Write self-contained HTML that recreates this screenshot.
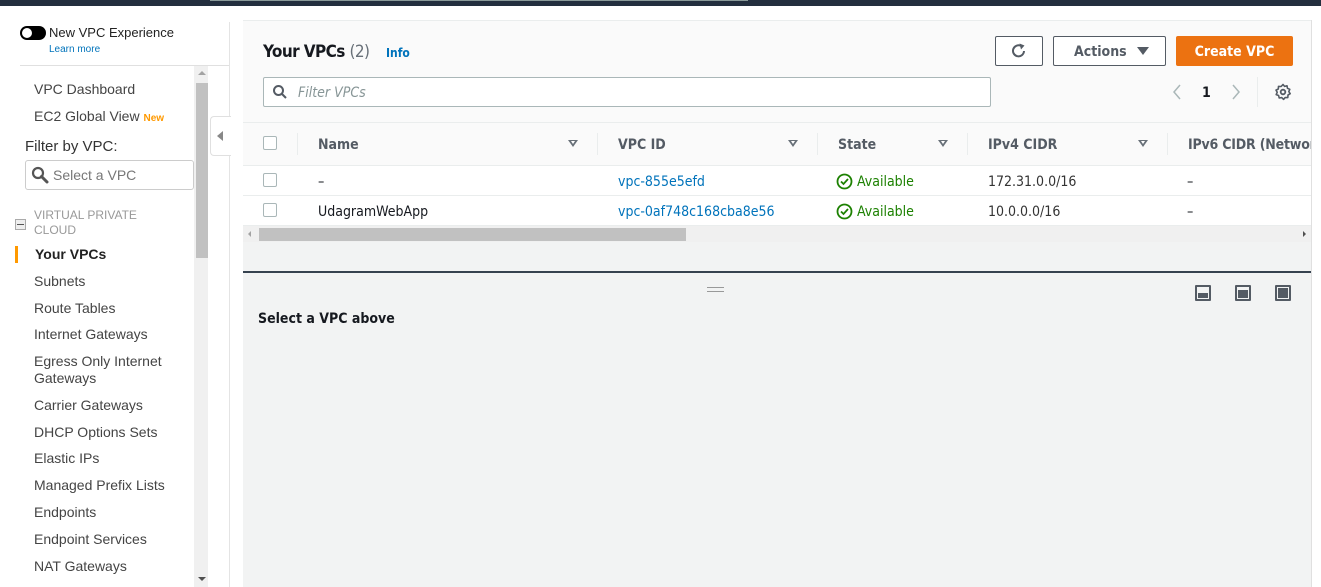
<!DOCTYPE html>
<html><head><meta charset="utf-8"><style>
*{margin:0;padding:0;box-sizing:border-box}
body{width:1321px;height:587px;overflow:hidden;background:#fff;font-family:"Liberation Sans",Arial,sans-serif;position:relative;color:#16191f}
.a{position:absolute}
.nav{font-size:14px;color:#444;position:absolute;left:34px;white-space:nowrap}
.m{font-family:"DejaVu Sans Condensed","Liberation Sans",sans-serif}
.th{position:absolute;top:137px;font-size:14px;font-weight:bold;color:#545b64}
.td{position:absolute;font-size:14px;color:#16191f}
.cb{position:absolute;left:263px;width:14px;height:14px;border:1px solid #aab7b8;border-radius:2px;background:#fff}
.sep{position:absolute;top:133px;width:1px;height:22px;background:#eaeded}
.tri{position:absolute;top:140px;width:0;height:0;border-left:5px solid transparent;border-right:5px solid transparent;border-top:7px solid #687078}
.tri::after{content:"";position:absolute;left:-2px;top:-6px;border-left:2px solid transparent;border-right:2px solid transparent;border-top:3px solid #fff}
.lnk{color:#0073bb}
.ok{color:#1d8102}
</style></head><body>
<div class="a" style="left:0;top:0;width:1321px;height:6px;background:#232f3e"></div>
<div class="a" style="left:210px;top:0;width:538px;height:1px;background:#8a9a99"></div>

<div class="a" style="left:20px;top:26px;width:26px;height:14px;border-radius:7px;background:#000"></div>
<div class="a" style="left:22px;top:28px;width:10px;height:10px;border-radius:5px;background:#fff"></div>
<div class="a" style="left:49px;top:25px;font-size:13px;color:#222">New VPC Experience</div>
<div class="a" style="left:49px;top:44px;font-size:10px;color:#0073bb">Learn more</div>
<div class="a" style="left:20px;top:65px;width:210px;height:1px;background:#e0e0e0"></div>
<div class="a" style="left:229px;top:22px;width:1px;height:565px;background:#e4e4e4"></div>
<div class="a" style="left:194px;top:66px;width:14px;height:521px;background:#f0f0f0"></div>
<div class="a" style="left:196px;top:83px;width:12px;height:175px;background:#c1c1c1"></div>
<div class="a" style="left:198px;top:71px;border-left:4px solid transparent;border-right:4px solid transparent;border-bottom:4px solid #a3a3a3"></div>
<div class="a" style="left:198px;top:577px;border-left:4px solid transparent;border-right:4px solid transparent;border-top:4px solid #505050"></div>
<div class="a" style="left:210px;top:116px;width:21px;height:40px;border:1px solid #e0e0e0;border-right:none;border-radius:4px 0 0 4px;background:#fff"></div>
<div class="a" style="left:217px;top:131px;border-top:5px solid transparent;border-bottom:5px solid transparent;border-right:6px solid #888"></div>

<div class="nav" style="top:81px">VPC Dashboard</div>
<div class="nav" style="top:108px">EC2 Global View <span style="font-size:10px;color:#ff9900;font-weight:bold">New</span></div>
<div class="nav" style="left:25px;top:138px;font-size:15px;color:#333">Filter by VPC:</div>
<div class="a" style="left:25px;top:160px;width:169px;height:30px;border:1px solid #ccc;border-radius:3px;background:#fff"></div>
<svg class="a" style="left:31px;top:166px" width="18" height="18" viewBox="0 0 18 18"><circle cx="7" cy="7" r="5" fill="none" stroke="#555" stroke-width="2.2"/><path d="M10.5 10.5L16 16" stroke="#555" stroke-width="3" stroke-linecap="round"/></svg>
<div class="nav" style="left:53px;top:167px;color:#777">Select a VPC</div>
<div class="a" style="left:15px;top:219px;width:11px;height:11px;border:1px solid #aaa;background:#eee"></div>
<div class="a" style="left:17px;top:224px;width:7px;height:1px;background:#555"></div>
<div class="nav" style="top:208px;font-size:12px;color:#999;line-height:15px">VIRTUAL PRIVATE<br>CLOUD</div>
<div class="a" style="left:15px;top:246px;width:3px;height:17px;background:#ff9900"></div>
<div class="nav" style="left:35px;top:246px;font-weight:bold;color:#222">Your VPCs</div>
<div class="nav" style="top:273px">Subnets</div>
<div class="nav" style="top:300px">Route Tables</div>
<div class="nav" style="top:326px">Internet Gateways</div>
<div class="nav" style="top:353px;line-height:17px">Egress Only Internet<br>Gateways</div>
<div class="nav" style="top:397px">Carrier Gateways</div>
<div class="nav" style="top:424px">DHCP Options Sets</div>
<div class="nav" style="top:450px">Elastic IPs</div>
<div class="nav" style="top:477px">Managed Prefix Lists</div>
<div class="nav" style="top:504px">Endpoints</div>
<div class="nav" style="top:531px">Endpoint Services</div>
<div class="nav" style="top:558px">NAT Gateways</div>

<div class="a" style="left:243px;top:20px;width:1069px;height:567px;background:#f2f3f3"></div>
<div class="a" style="left:243px;top:20px;width:1069px;height:1px;background:#eaeded"></div>
<div class="a" style="left:1311px;top:20px;width:1px;height:567px;background:#e0e0e0"></div>
<div class="a" style="left:243px;top:21px;width:1068px;height:101px;background:#fafafa"></div>
<div class="a" style="left:243px;top:122px;width:1068px;height:1px;background:#eaeded"></div>
<div class="a m" style="left:263px;top:42px;font-size:17px;letter-spacing:-0.6px;font-weight:bold;color:#16191f">Your VPCs <span style="font-weight:normal;color:#687078">(2)</span></div>
<div class="a m" style="left:386px;top:46px;font-size:12px;color:#0073bb;font-weight:bold">Info</div>

<div class="a" style="left:995px;top:36px;width:48px;height:30px;border:1px solid #545b64;border-radius:2px;background:#fff"></div>
<svg class="a" style="left:1010px;top:42px" width="18" height="18" viewBox="0 0 18 18"><path d="M14 9A5.5 5.5 0 1 1 11.5 4.2" fill="none" stroke="#545b64" stroke-width="2"/><path d="M9.5 1.5L14.5 3.5L11 7.5Z" fill="#545b64"/></svg>
<div class="a" style="left:1053px;top:36px;width:113px;height:30px;border:1px solid #545b64;border-radius:2px;background:#fff"></div>
<div class="a m" style="left:1074px;top:44px;font-size:14px;font-weight:bold;color:#545b64">Actions</div>
<div class="a" style="left:1137px;top:47px;border-left:6px solid transparent;border-right:6px solid transparent;border-top:8px solid #545b64"></div>
<div class="a" style="left:1176px;top:36px;width:117px;height:30px;border-radius:2px;background:#ec7211"></div>
<div class="a m" style="left:1176px;top:44px;width:117px;text-align:center;font-size:14px;font-weight:bold;color:#fff">Create VPC</div>

<div class="a" style="left:263px;top:77px;width:728px;height:30px;border:1px solid #aab7b8;border-radius:2px;background:#fff"></div>
<svg class="a" style="left:272px;top:84px" width="16" height="16" viewBox="0 0 16 16"><circle cx="6.5" cy="6.5" r="4.5" fill="none" stroke="#545b64" stroke-width="2"/><path d="M10 10L14 14" stroke="#545b64" stroke-width="2"/></svg>
<div class="a m" style="left:298px;top:85px;font-size:14px;font-style:italic;color:#879596">Filter VPCs</div>

<svg class="a" style="left:1170px;top:82px" width="14" height="20" viewBox="0 0 14 20"><path d="M10 3L4 10L10 17" fill="none" stroke="#aab7b8" stroke-width="1.5"/></svg>
<div class="a m" style="left:1202px;top:85px;font-size:14px;font-weight:bold;color:#16191f">1</div>
<svg class="a" style="left:1229px;top:82px" width="14" height="20" viewBox="0 0 14 20"><path d="M4 3L10 10L4 17" fill="none" stroke="#aab7b8" stroke-width="1.5"/></svg>
<div class="a" style="left:1257px;top:77px;width:1px;height:30px;background:#eaeded"></div>
<svg class="a" style="left:1274px;top:83px" width="18" height="18" viewBox="0 0 18 18"><circle cx="9" cy="9" r="2.3" fill="none" stroke="#545b64" stroke-width="1.8"/><path d="M9 1.5L10.6 3.4L13 2.8L13.5 5.3L15.8 6.3L14.8 8.6L16.2 10.7L14 12L13.8 14.6L11.2 14.5L9.6 16.4L7.7 14.6L5.2 15L4.6 12.5L2.2 11.6L3.2 9.3L2 7.1L4.3 6L4.5 3.4L7.1 3.5Z" fill="none" stroke="#545b64" stroke-width="1.6" stroke-linejoin="round"/></svg>

<div class="a" style="left:243px;top:123px;width:1068px;height:42px;background:#fafafa"></div>
<div class="a" style="left:243px;top:165px;width:1068px;height:1px;background:#eaeded"></div>
<div class="cb" style="top:136px"></div>
<div class="sep" style="left:297px"></div>
<div class="th m" style="left:318px">Name</div><div class="tri" style="left:568px"></div>
<div class="sep" style="left:597px"></div>
<div class="th m" style="left:618px">VPC ID</div><div class="tri" style="left:788px"></div>
<div class="sep" style="left:817px"></div>
<div class="th m" style="left:838px">State</div><div class="tri" style="left:938px"></div>
<div class="sep" style="left:967px"></div>
<div class="th m" style="left:988px">IPv4 CIDR</div><div class="tri" style="left:1138px"></div>
<div class="sep" style="left:1167px"></div>
<div class="th m" style="left:1188px;width:123px;overflow:hidden;white-space:nowrap;letter-spacing:-0.2px">IPv6 CIDR (Network border group)</div>

<div class="a" style="left:243px;top:166px;width:1068px;height:29px;background:#fff"></div>
<div class="a" style="left:243px;top:195px;width:1068px;height:1px;background:#eaeded"></div>
<div class="a" style="left:243px;top:196px;width:1068px;height:29px;background:#fff"></div>
<div class="a" style="left:243px;top:225px;width:1068px;height:1px;background:#eaeded"></div>
<div class="cb" style="top:173px"></div>
<div class="cb" style="top:203px"></div>
<div class="td m" style="left:318px;top:174px">–</div>
<div class="td m" style="left:318px;top:204px">UdagramWebApp</div>
<div class="td m lnk" style="left:618px;top:174px">vpc-855e5efd</div>
<div class="td m lnk" style="left:618px;top:204px">vpc-0af748c168cba8e56</div>
<svg class="a" style="left:836px;top:173px" width="17" height="17" viewBox="0 0 17 17"><circle cx="8.5" cy="8.5" r="7" fill="none" stroke="#1d8102" stroke-width="1.8"/><path d="M5 8.5L7.5 11L12 6" fill="none" stroke="#1d8102" stroke-width="1.8"/></svg>
<svg class="a" style="left:836px;top:203px" width="17" height="17" viewBox="0 0 17 17"><circle cx="8.5" cy="8.5" r="7" fill="none" stroke="#1d8102" stroke-width="1.8"/><path d="M5 8.5L7.5 11L12 6" fill="none" stroke="#1d8102" stroke-width="1.8"/></svg>
<div class="td m ok" style="left:857px;top:174px">Available</div>
<div class="td m ok" style="left:857px;top:204px">Available</div>
<div class="td m" style="left:988px;top:174px;color:#333">172.31.0.0/16</div>
<div class="td m" style="left:988px;top:204px;color:#333">10.0.0.0/16</div>
<div class="td m" style="left:1187px;top:174px">–</div>
<div class="td m" style="left:1187px;top:204px">–</div>

<div class="a" style="left:243px;top:226px;width:1068px;height:16px;background:#f0f0f0"></div>
<div class="a" style="left:259px;top:228px;width:427px;height:13px;background:#c1c1c1"></div>
<div class="a" style="left:248px;top:231px;border-top:3px solid transparent;border-bottom:3px solid transparent;border-right:3px solid #a3a3a3"></div>
<div class="a" style="left:1303px;top:231px;border-top:3px solid transparent;border-bottom:3px solid transparent;border-left:3px solid #505050"></div>

<div class="a" style="left:243px;top:271px;width:1068px;height:2px;background:#36424f"></div>
<div class="a" style="left:707px;top:287px;width:17px;height:1px;background:#999"></div>
<div class="a" style="left:707px;top:291px;width:17px;height:1px;background:#999"></div>
<div class="a m" style="left:258px;top:311px;font-size:14px;font-weight:bold;color:#16191f">Select a VPC above</div>

<div class="a" style="left:1195px;top:285px;width:16px;height:16px;border:2px solid #545b64;border-radius:1px"></div>
<div class="a" style="left:1198px;top:293px;width:10px;height:5px;background:#545b64"></div>
<div class="a" style="left:1235px;top:285px;width:16px;height:16px;border:2px solid #545b64;border-radius:1px"></div>
<div class="a" style="left:1238px;top:290px;width:10px;height:8px;background:#545b64"></div>
<div class="a" style="left:1275px;top:285px;width:16px;height:16px;border:2px solid #545b64;border-radius:1px"></div>
<div class="a" style="left:1278px;top:288px;width:10px;height:10px;background:#545b64"></div>
</body></html>
